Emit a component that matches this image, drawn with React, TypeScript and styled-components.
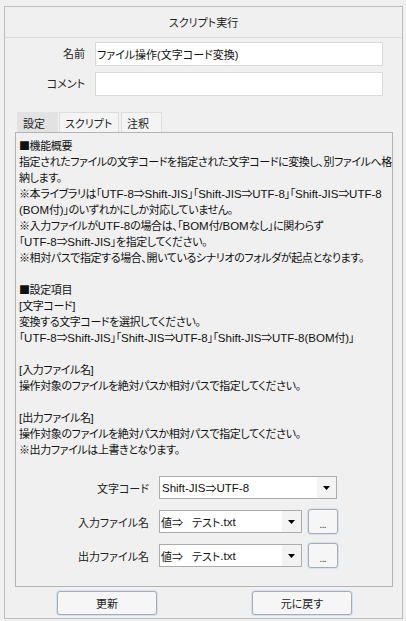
import React from "react";
import styled, { createGlobalStyle } from "styled-components";

const GlobalStyle = createGlobalStyle`
  html, body { margin: 0; padding: 0; background: #f0f0f0; }
  body {
    font-family: "Lato", "Noto Sans CJK JP", sans-serif;
    font-size: 11px;
    color: #111;
    font-feature-settings: "palt";
  }
  * { box-sizing: border-box; }
`;

const Frame = styled.div`
  width: 399px;
  height: 613px;
  margin: 6px 0 0 4px;
  border: 1px solid #bdbdbd;
  background: #f0f0f0;
  display: flex;
  flex-direction: column;
`;

const TitleBar = styled.div`
  height: 31px;
  flex: none;
  border-bottom: 1px solid #d9d9d9;
  display: flex;
  align-items: center;
  justify-content: center;
  color: #222;
`;

const FieldGrid = styled.div`
  display: grid;
  grid-template-columns: 80px 288px;
  column-gap: 10px;
  row-gap: 6px;
  padding-top: 4px;
  align-items: center;
`;

const FieldLabel = styled.label`
  text-align: right;
  color: #222;
  line-height: 16px;
`;

const TextInput = styled.input`
  height: 24px;
  border: 1px solid #dadada;
  background: #fff;
  padding: 0 1px;
  font: inherit;
  font-family: "Liberation Sans", "Noto Sans CJK JP", sans-serif;
  font-feature-settings: "palt";
  color: #111;
  outline: none;
`;

const TabStrip = styled.div`
  display: flex;
  margin: 16px 0 0 12px;
  height: 20px;
`;

const Tab = styled.div<{ $w: number; $active?: boolean; $gap?: number }>`
  width: ${(p) => p.$w}px;
  height: 20px;
  margin-right: ${(p) => p.$gap ?? 0}px;
  padding-left: 5px;
  display: flex;
  align-items: center;
  background: ${(p) => (p.$active ? "#e2e2e2" : "#f4f4f4")};
  border: 1px solid ${(p) => (p.$active ? "#e2e2e2" : "#dedede")};
  border-bottom: none;
  color: #222;
`;

const Panel = styled.div`
  margin-left: 10px;
  width: 378px;
  height: 455px;
  border: 1px solid #b4b4b4;
  display: flex;
  flex-direction: column;
`;

const Description = styled.div`
  flex: 1;
  padding: 5px 0 0 3px;
  letter-spacing: -0.4px;
  overflow: hidden;
  color: #111;
`;

const Line = styled.div`
  height: 16px;
  line-height: 16px;
  white-space: pre;
`;

const Latin = styled.span`
  font-family: "Liberation Sans", Arial, sans-serif;
  font-size: 11.5px;
  letter-spacing: 0;
`;

const Form = styled.div`
  display: flex;
  flex-direction: column;
  gap: 9px;
  padding-bottom: 18px;
`;

const FormRow = styled.div`
  display: flex;
  align-items: center;
  height: 25px;
`;

const FormLabel = styled.div`
  width: 133px;
  margin-right: 10px;
  text-align: right;
  color: #222;
`;

const Select = styled.div<{ $w: number }>`
  width: ${(p) => p.$w}px;
  height: 23px;
  border: 1px solid #acacac;
  background: #fff;
  display: flex;
  align-items: stretch;
`;

const SelectValue = styled.div<{ $pad: number }>`
  flex: 1;
  display: flex;
  align-items: center;
  padding-left: ${(p) => p.$pad}px;
  white-space: pre;
  overflow: hidden;
`;

const ArrowBox = styled.div`
  width: 19px;
  background: #f3f3f3;
  display: flex;
  align-items: center;
  justify-content: center;
`;

const ValuePrefix = styled.span`
  margin-right: 9px;
`;

const DotsButton = styled.button`
  width: 30px;
  height: 25px;
  margin-left: 6px;
  border: 1px solid #acacac;
  border-radius: 3px;
  background: #f6f6f6;
  box-shadow: 0 0 0 1px rgba(200, 222, 245, 0.8);
  font: inherit;
  font-size: 9px;
  color: #333;
  padding: 6px 0 0 0;
  display: flex;
  align-items: center;
  justify-content: center;
`;

const BottomBar = styled.div`
  display: flex;
  gap: 95px;
  padding-left: 52px;
  margin-top: 4px;
`;

const ActionButton = styled.button`
  width: 100px;
  height: 24px;
  border: 1px solid #acacac;
  border-radius: 3px;
  background: #f6f6f6;
  box-shadow: 0 0 0 1px rgba(200, 222, 245, 0.8);
  font: inherit;
  font-feature-settings: "palt";
  color: #222;
  padding: 0;
`;

const Arrow = () => (
  <svg width="7" height="4" viewBox="0 0 7 4">
    <path d="M0 0H7L3.5 4Z" fill="#000" />
  </svg>
);

const LATIN_RUN = /([A-Za-z0-9\-\/\.\(\)\[\]]+)/;

const mixed = (text: string) =>
  text
    .split(LATIN_RUN)
    .filter((part) => part !== "")
    .map((part, i) =>
      LATIN_RUN.test(part) ? <Latin key={i}>{part}</Latin> : <React.Fragment key={i}>{part}</React.Fragment>
    );

const description = [
  "■機能概要",
  "指定されたファイルの文字コードを指定された文字コードに変換し、別ファイルへ格",
  "納します。",
  "※本ライブラリは「UTF-8⇒Shift-JIS」「Shift-JIS⇒UTF-8」「Shift-JIS⇒UTF-8",
  "(BOM付)」のいずれかにしか対応していません。",
  "※入力ファイルがUTF-8の場合は、「BOM付/BOMなし」に関わらず",
  "「UTF-8⇒Shift-JIS」を指定してください。",
  "※相対パスで指定する場合、開いているシナリオのフォルダが起点となります。",
  "",
  "■設定項目",
  "[文字コード]",
  "変換する文字コードを選択してください。",
  "「UTF-8⇒Shift-JIS」「Shift-JIS⇒UTF-8」「Shift-JIS⇒UTF-8(BOM付)」",
  "",
  "[入力ファイル名]",
  "操作対象のファイルを絶対パスか相対パスで指定してください。",
  "",
  "[出力ファイル名]",
  "操作対象のファイルを絶対パスか相対パスで指定してください。",
  "※出力ファイルは上書きとなります。",
];

const FileRow = ({ label, file }: { label: string; file: string }) => (
  <FormRow>
    <FormLabel>{label}</FormLabel>
    <Select $w={143}>
      <SelectValue $pad={1}>
        <ValuePrefix>値⇒</ValuePrefix>
        {mixed(file)}
      </SelectValue>
      <ArrowBox>
        <Arrow />
      </ArrowBox>
    </Select>
    <DotsButton>...</DotsButton>
  </FormRow>
);

export default function App() {
  return (
    <>
      <GlobalStyle />
      <Frame>
        <TitleBar>スクリプト実行</TitleBar>
        <FieldGrid>
          <FieldLabel>名前</FieldLabel>
          <TextInput readOnly value="ファイル操作(文字コード変換)" />
          <FieldLabel>コメント</FieldLabel>
          <TextInput readOnly value="" />
        </FieldGrid>
        <TabStrip>
          <Tab $w={41} $active $gap={1}>設定</Tab>
          <Tab $w={60} $gap={2}>スクリプト</Tab>
          <Tab $w={41}>注釈</Tab>
        </TabStrip>
        <Panel>
          <Description>
            {description.map((line, i) => (
              <Line key={i}>{mixed(line)}</Line>
            ))}
          </Description>
          <Form>
            <FormRow>
              <FormLabel>文字コード</FormLabel>
              <Select $w={178}>
                <SelectValue $pad={2}>{mixed("Shift-JIS⇒UTF-8")}</SelectValue>
                <ArrowBox>
                  <Arrow />
                </ArrowBox>
              </Select>
            </FormRow>
            <FileRow label="入力ファイル名" file="テスト.txt" />
            <FileRow label="出力ファイル名" file="テスト.txt" />
          </Form>
        </Panel>
        <BottomBar>
          <ActionButton>更新</ActionButton>
          <ActionButton>元に戻す</ActionButton>
        </BottomBar>
      </Frame>
    </>
  );
}
